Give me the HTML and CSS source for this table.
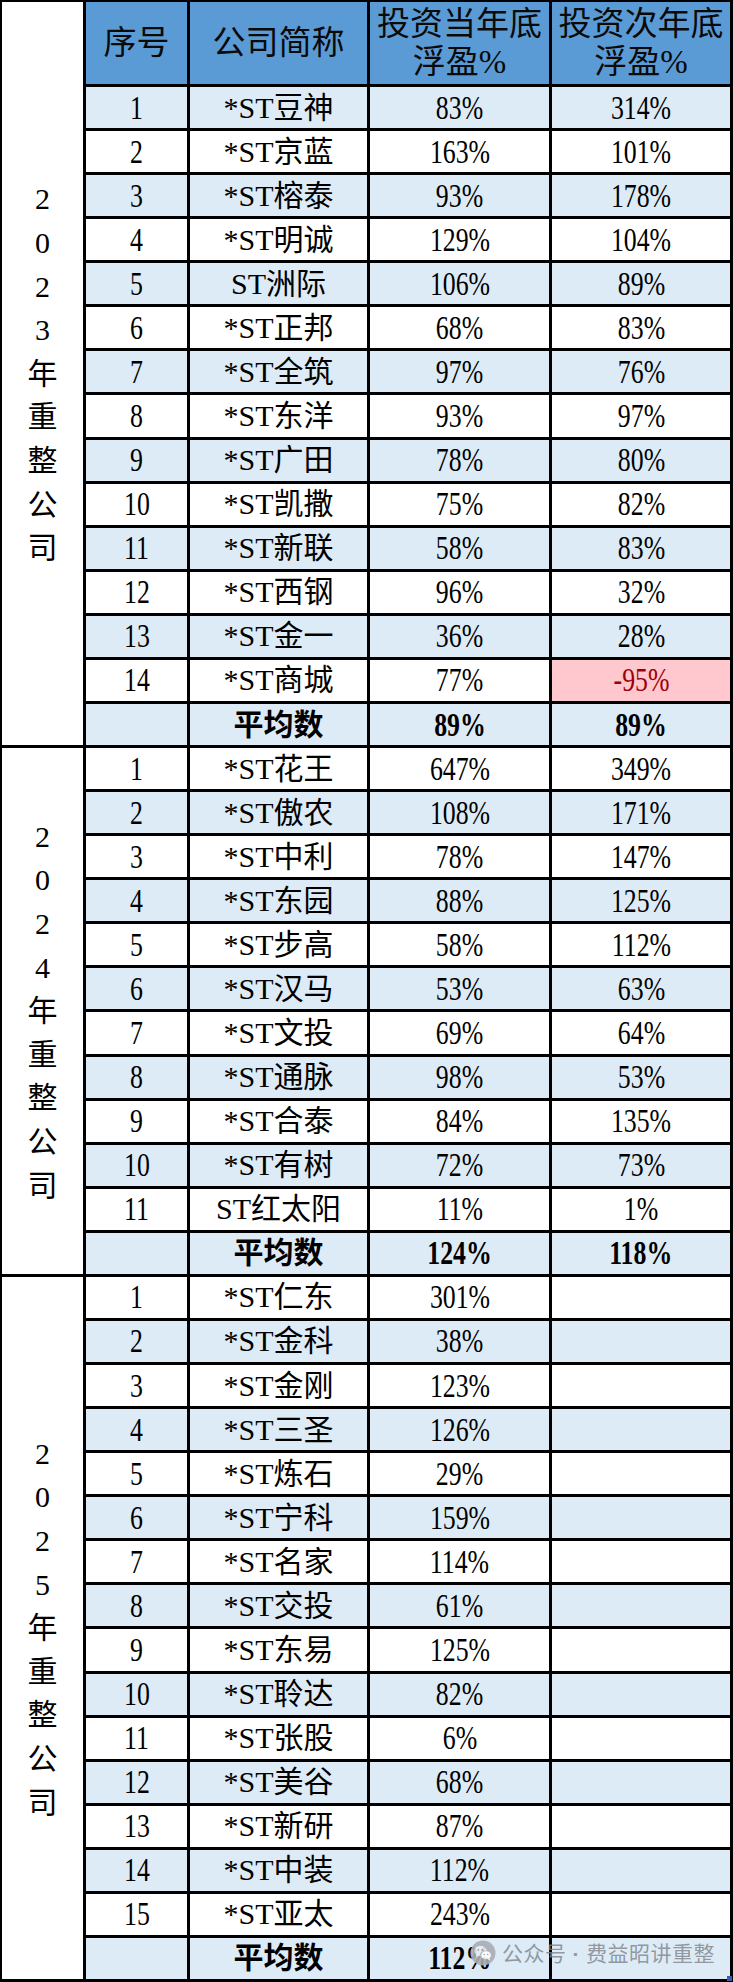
FILE: index.html
```html
<!DOCTYPE html>
<html lang="zh-CN">
<head>
<meta charset="utf-8">
<title>重整公司浮盈</title>
<link rel="stylesheet" href="styles.css">
</head>
<body>
<div class="sheet">
  <div class="yr yr1"><span>2</span><span>0</span><span>2</span><span>3</span><span>年</span><span>重</span><span>整</span><span>公</span><span>司</span></div>
  <div class="yr yr2"><span>2</span><span>0</span><span>2</span><span>4</span><span>年</span><span>重</span><span>整</span><span>公</span><span>司</span></div>
  <div class="yr yr3"><span>2</span><span>0</span><span>2</span><span>5</span><span>年</span><span>重</span><span>整</span><span>公</span><span>司</span></div>

  <div class="row hd"><div class="c">序号</div><div class="c">公司简称</div><div class="c">投资当年底<br>浮盈%</div><div class="c">投资次年底<br>浮盈%</div></div>

  <div class="row alt"><div class="c"><span class="n">1</span></div><div class="c">*ST豆神</div><div class="c"><span class="n">83%</span></div><div class="c"><span class="n">314%</span></div></div>
  <div class="row"><div class="c"><span class="n">2</span></div><div class="c">*ST京蓝</div><div class="c"><span class="n">163%</span></div><div class="c"><span class="n">101%</span></div></div>
  <div class="row alt"><div class="c"><span class="n">3</span></div><div class="c">*ST榕泰</div><div class="c"><span class="n">93%</span></div><div class="c"><span class="n">178%</span></div></div>
  <div class="row"><div class="c"><span class="n">4</span></div><div class="c">*ST明诚</div><div class="c"><span class="n">129%</span></div><div class="c"><span class="n">104%</span></div></div>
  <div class="row alt"><div class="c"><span class="n">5</span></div><div class="c">ST洲际</div><div class="c"><span class="n">106%</span></div><div class="c"><span class="n">89%</span></div></div>
  <div class="row"><div class="c"><span class="n">6</span></div><div class="c">*ST正邦</div><div class="c"><span class="n">68%</span></div><div class="c"><span class="n">83%</span></div></div>
  <div class="row alt"><div class="c"><span class="n">7</span></div><div class="c">*ST全筑</div><div class="c"><span class="n">97%</span></div><div class="c"><span class="n">76%</span></div></div>
  <div class="row"><div class="c"><span class="n">8</span></div><div class="c">*ST东洋</div><div class="c"><span class="n">93%</span></div><div class="c"><span class="n">97%</span></div></div>
  <div class="row alt"><div class="c"><span class="n">9</span></div><div class="c">*ST广田</div><div class="c"><span class="n">78%</span></div><div class="c"><span class="n">80%</span></div></div>
  <div class="row"><div class="c"><span class="n">10</span></div><div class="c">*ST凯撒</div><div class="c"><span class="n">75%</span></div><div class="c"><span class="n">82%</span></div></div>
  <div class="row alt"><div class="c"><span class="n">11</span></div><div class="c">*ST新联</div><div class="c"><span class="n">58%</span></div><div class="c"><span class="n">83%</span></div></div>
  <div class="row"><div class="c"><span class="n">12</span></div><div class="c">*ST西钢</div><div class="c"><span class="n">96%</span></div><div class="c"><span class="n">32%</span></div></div>
  <div class="row alt"><div class="c"><span class="n">13</span></div><div class="c">*ST金一</div><div class="c"><span class="n">36%</span></div><div class="c"><span class="n">28%</span></div></div>
  <div class="row"><div class="c"><span class="n">14</span></div><div class="c">*ST商城</div><div class="c"><span class="n">77%</span></div><div class="c neg"><span class="n">-95%</span></div></div>
  <div class="row alt avg"><div class="c"></div><div class="c">平均数</div><div class="c"><span class="n">89%</span></div><div class="c"><span class="n">89%</span></div></div>

  <div class="row"><div class="c"><span class="n">1</span></div><div class="c">*ST花王</div><div class="c"><span class="n">647%</span></div><div class="c"><span class="n">349%</span></div></div>
  <div class="row alt"><div class="c"><span class="n">2</span></div><div class="c">*ST傲农</div><div class="c"><span class="n">108%</span></div><div class="c"><span class="n">171%</span></div></div>
  <div class="row"><div class="c"><span class="n">3</span></div><div class="c">*ST中利</div><div class="c"><span class="n">78%</span></div><div class="c"><span class="n">147%</span></div></div>
  <div class="row alt"><div class="c"><span class="n">4</span></div><div class="c">*ST东园</div><div class="c"><span class="n">88%</span></div><div class="c"><span class="n">125%</span></div></div>
  <div class="row"><div class="c"><span class="n">5</span></div><div class="c">*ST步高</div><div class="c"><span class="n">58%</span></div><div class="c"><span class="n">112%</span></div></div>
  <div class="row alt"><div class="c"><span class="n">6</span></div><div class="c">*ST汉马</div><div class="c"><span class="n">53%</span></div><div class="c"><span class="n">63%</span></div></div>
  <div class="row"><div class="c"><span class="n">7</span></div><div class="c">*ST文投</div><div class="c"><span class="n">69%</span></div><div class="c"><span class="n">64%</span></div></div>
  <div class="row alt"><div class="c"><span class="n">8</span></div><div class="c">*ST通脉</div><div class="c"><span class="n">98%</span></div><div class="c"><span class="n">53%</span></div></div>
  <div class="row"><div class="c"><span class="n">9</span></div><div class="c">*ST合泰</div><div class="c"><span class="n">84%</span></div><div class="c"><span class="n">135%</span></div></div>
  <div class="row alt"><div class="c"><span class="n">10</span></div><div class="c">*ST有树</div><div class="c"><span class="n">72%</span></div><div class="c"><span class="n">73%</span></div></div>
  <div class="row"><div class="c"><span class="n">11</span></div><div class="c">ST红太阳</div><div class="c"><span class="n">11%</span></div><div class="c"><span class="n">1%</span></div></div>
  <div class="row alt avg"><div class="c"></div><div class="c">平均数</div><div class="c"><span class="n">124%</span></div><div class="c"><span class="n">118%</span></div></div>

  <div class="row"><div class="c"><span class="n">1</span></div><div class="c">*ST仁东</div><div class="c"><span class="n">301%</span></div><div class="c"></div></div>
  <div class="row alt"><div class="c"><span class="n">2</span></div><div class="c">*ST金科</div><div class="c"><span class="n">38%</span></div><div class="c"></div></div>
  <div class="row"><div class="c"><span class="n">3</span></div><div class="c">*ST金刚</div><div class="c"><span class="n">123%</span></div><div class="c"></div></div>
  <div class="row alt"><div class="c"><span class="n">4</span></div><div class="c">*ST三圣</div><div class="c"><span class="n">126%</span></div><div class="c"></div></div>
  <div class="row"><div class="c"><span class="n">5</span></div><div class="c">*ST炼石</div><div class="c"><span class="n">29%</span></div><div class="c"></div></div>
  <div class="row alt"><div class="c"><span class="n">6</span></div><div class="c">*ST宁科</div><div class="c"><span class="n">159%</span></div><div class="c"></div></div>
  <div class="row"><div class="c"><span class="n">7</span></div><div class="c">*ST名家</div><div class="c"><span class="n">114%</span></div><div class="c"></div></div>
  <div class="row alt"><div class="c"><span class="n">8</span></div><div class="c">*ST交投</div><div class="c"><span class="n">61%</span></div><div class="c"></div></div>
  <div class="row"><div class="c"><span class="n">9</span></div><div class="c">*ST东易</div><div class="c"><span class="n">125%</span></div><div class="c"></div></div>
  <div class="row alt"><div class="c"><span class="n">10</span></div><div class="c">*ST聆达</div><div class="c"><span class="n">82%</span></div><div class="c"></div></div>
  <div class="row"><div class="c"><span class="n">11</span></div><div class="c">*ST张股</div><div class="c"><span class="n">6%</span></div><div class="c"></div></div>
  <div class="row alt"><div class="c"><span class="n">12</span></div><div class="c">*ST美谷</div><div class="c"><span class="n">68%</span></div><div class="c"></div></div>
  <div class="row"><div class="c"><span class="n">13</span></div><div class="c">*ST新研</div><div class="c"><span class="n">87%</span></div><div class="c"></div></div>
  <div class="row alt"><div class="c"><span class="n">14</span></div><div class="c">*ST中装</div><div class="c"><span class="n">112%</span></div><div class="c"></div></div>
  <div class="row"><div class="c"><span class="n">15</span></div><div class="c">*ST亚太</div><div class="c"><span class="n">243%</span></div><div class="c"></div></div>
  <div class="row alt avg"><div class="c"></div><div class="c">平均数</div><div class="c"><span class="n">112%</span></div><div class="c"></div></div>

  <div class="watermark">
    <svg class="wm-icon" width="26" height="26" viewBox="0 0 26 26" aria-hidden="true">
      <circle cx="13" cy="13" r="12.5" fill="#a8adb2"/>
      <ellipse cx="10.5" cy="11" rx="6.2" ry="5.2" fill="#e8ecef"/>
      <path d="M6.5 14.5 L5.8 17.6 L9 15.6 Z" fill="#e8ecef"/>
      <ellipse cx="16" cy="15.2" rx="5.2" ry="4.4" fill="#ffffff" stroke="#a8adb2" stroke-width="0.8"/>
      <path d="M19.2 18 L20.2 20.4 L17.6 19 Z" fill="#ffffff"/>
      <circle cx="8.3" cy="9.8" r="0.9" fill="#8c9297"/>
      <circle cx="12.4" cy="9.8" r="0.9" fill="#8c9297"/>
      <circle cx="14.3" cy="14.4" r="0.75" fill="#8c9297"/>
      <circle cx="17.8" cy="14.4" r="0.75" fill="#8c9297"/>
    </svg>
    <span class="wm-text">公众号<span class="wm-dot">·</span>费益昭讲重整</span>
  </div>
  <div class="handle"></div>
</div>
</body>
</html>
```

FILE: styles.css
```css
html, body {
  margin: 0;
  padding: 0;
  background: #ffffff;
}

.sheet {
  position: relative;
  width: 733px;
  height: 1982px;
  box-sizing: border-box;
  padding: 2px 3px 3px 2px;
  background: #000000;
  display: grid;
  grid-template-columns: 81px 101px 177px 179px 178px;
  grid-template-rows: 82px repeat(43, 1fr);
  gap: 3px;
  font-family: "Liberation Serif", "Noto Sans CJK SC", serif;
  font-size: 30px;
  color: #000000;
}

.row {
  display: contents;
}

.c {
  display: flex;
  align-items: center;
  justify-content: center;
  text-align: center;
  background: #ffffff;
  line-height: 1;
  white-space: nowrap;
}

.n {
  display: inline-block;
  transform: scale(0.86, 1.1);
}

.row.alt .c {
  background: #ddebf7;
}

.row.hd .c {
  background: #5b9bd5;
  font-size: 33px;
  line-height: 38px;
  color: #0a0a0a;
}

.row.avg .c {
  font-weight: bold;
}

.row .c.neg {
  background: #ffc7ce;
  color: #9c0006;
}

.yr {
  grid-column: 1;
  background: #ffffff;
  display: flex;
  flex-direction: column;
  align-items: center;
  justify-content: center;
}

.yr1 { grid-row: 1 / 17; }
.yr2 { grid-row: 17 / 29; }
.yr3 { grid-row: 29 / 45; }

.yr span {
  display: block;
  height: 43.6px;
  line-height: 43.6px;
}

.watermark {
  position: absolute;
  left: 470px;
  top: 1939px;
  display: flex;
  align-items: center;
  gap: 6px;
  font-family: "Noto Sans CJK SC", sans-serif;
  font-size: 21px;
  line-height: 26px;
  color: rgba(125, 130, 136, 0.8);
  white-space: nowrap;
  pointer-events: none;
}

.wm-text {
  display: inline-block;
  letter-spacing: 0.5px;
}

.wm-dot {
  display: inline-block;
  margin: 0 6px;
  font-family: "Liberation Sans", sans-serif;
  font-weight: bold;
}

.wm-icon {
  display: block;
  flex: none;
  opacity: 0.9;
}

.handle {
  position: absolute;
  right: 1px;
  bottom: 1px;
  width: 5px;
  height: 5px;
  background: #3a5fa8;
}
```
